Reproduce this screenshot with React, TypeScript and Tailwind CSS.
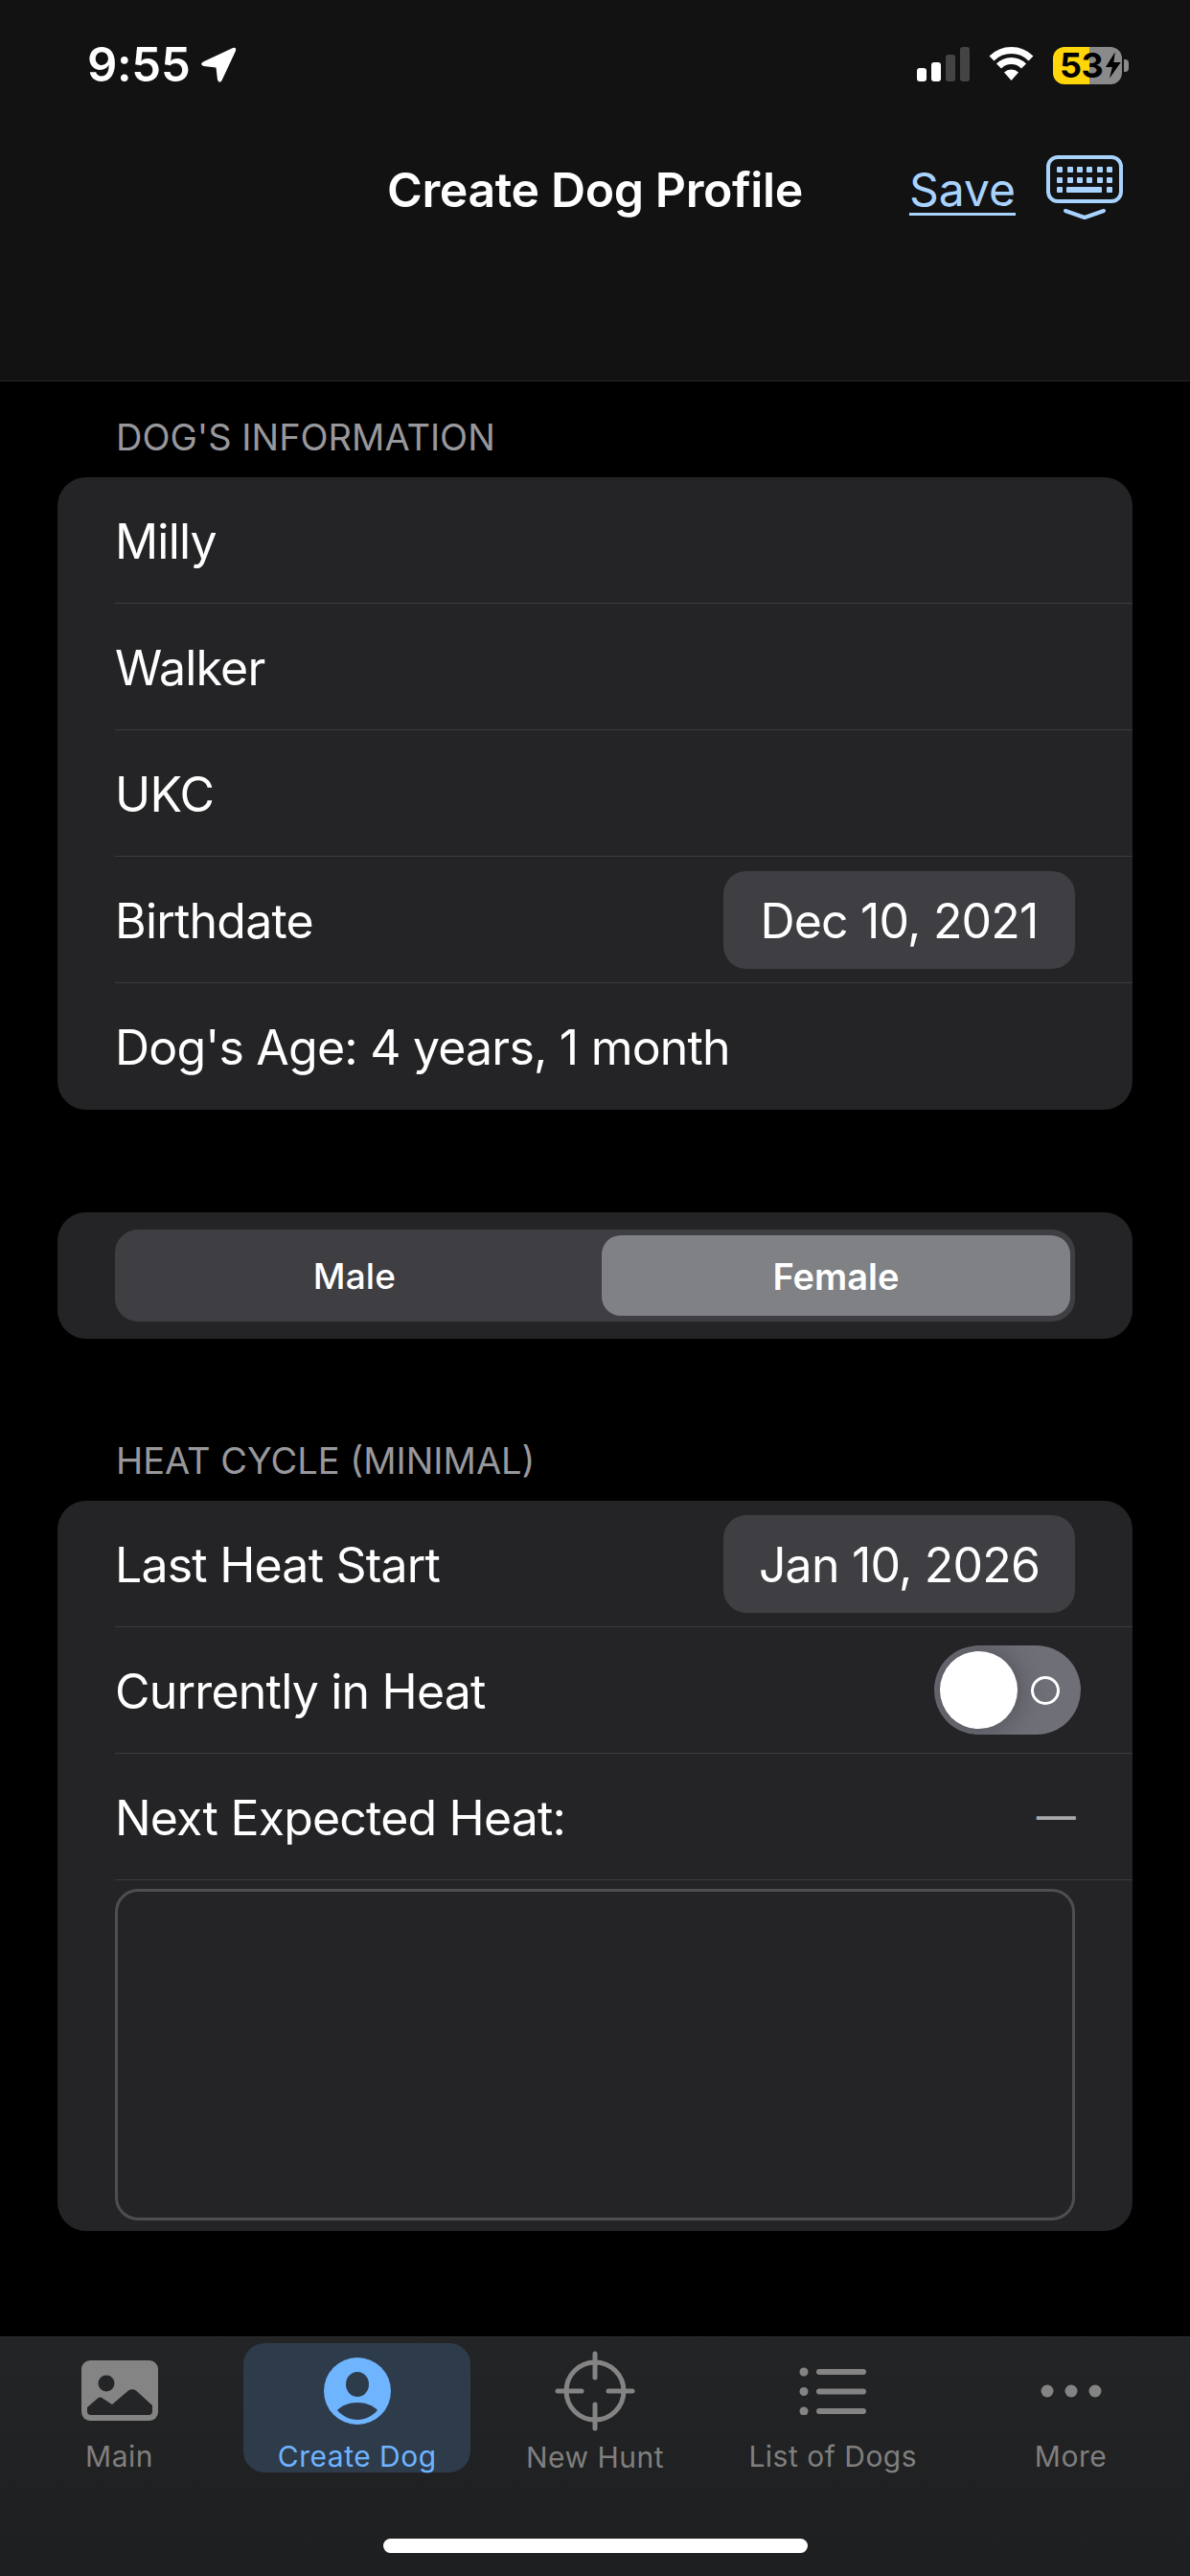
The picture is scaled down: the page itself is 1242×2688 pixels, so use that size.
import React from "react";

function Sep() {
  return <div className="ml-[60px] h-px bg-[#3b3b3e]" />;
}

function Label({ children }: { children: React.ReactNode }) {
  return <span className="pt-[3px]">{children}</span>;
}

function Row({ children }: { children: React.ReactNode }) {
  return <div className="h-[131px] px-[60px] flex items-center justify-between text-[50px] tracking-[-0.8px] text-white">{children}</div>;
}

function DatePill({ text }: { text: string }) {
  return <div className="w-[367px] h-[102px] pt-[3px] rounded-[24px] bg-[#3e3e43] flex items-center justify-center text-[50px] tracking-[-0.8px] text-white">{text}</div>;
}

function SectionLabel({ text }: { text: string }) {
  return <div className="h-[44px] leading-[44px] pl-[61px] text-[38px] tracking-[0px] text-[#98989c]">{text}</div>;
}

function PhotoIcon() {
  return (
    <svg width="80" height="63" viewBox="0 0 80 63">
      <rect x="0" y="0" width="80" height="63" rx="9" fill="#848484" />
      <circle cx="26" cy="24" r="8.5" fill="#242526" />
      <path d="M6 49 L17 39.5 Q19.5 37.5 22 39.5 L32 46 L49 31.5 Q53 29 57 31.5 L74 47 V53 Q74 57 70 57 H10 Q6 57 6 53 Z" fill="#242526" />
    </svg>
  );
}

function PersonIcon() {
  return (
    <svg width="70" height="70" viewBox="0 0 70 70">
      <circle cx="35" cy="35" r="35" fill="#6eb4ff" />
      <ellipse cx="35" cy="28" rx="12" ry="13" fill="#2e3b4a" />
      <path d="M14 55 C19 50 26 47 35 47 C44 47 51 50 56 55 C51 61 43 65 35 65 C27 65 19 61 14 55Z" fill="#2e3b4a" />
    </svg>
  );
}

function CrossIcon() {
  return (
    <svg width="84" height="84" viewBox="0 0 84 84" fill="none" stroke="#848484" strokeWidth="5" strokeLinecap="round">
      <circle cx="42" cy="42" r="30" />
      <path d="M3 42H28M56 42H81M42 3V28M42 56V81" />
    </svg>
  );
}

function ListIcon() {
  return (
    <svg width="70" height="50" viewBox="0 0 70 50" fill="#848484">
      <circle cx="5" cy="5" r="4.5" />
      <circle cx="5" cy="25.5" r="4.5" />
      <circle cx="5" cy="46" r="4.5" />
      <rect x="18" y="2" width="52" height="6" rx="3" />
      <rect x="18" y="22.5" width="52" height="6" rx="3" />
      <rect x="18" y="43" width="52" height="6" rx="3" />
    </svg>
  );
}

function MoreIcon() {
  return (
    <svg width="64" height="14" viewBox="0 0 64 14" fill="#848484">
      <circle cx="7" cy="7" r="6.5" />
      <circle cx="32" cy="7" r="6.5" />
      <circle cx="57" cy="7" r="6.5" />
    </svg>
  );
}

function Tab({ label, icon, active }: { label: string; icon: React.ReactNode; active?: boolean }) {
  return (
    <div className={active ? "w-[237px] h-[135px] rounded-[22px] bg-[#2e3b4a] flex flex-col items-center" : "w-[237px] h-[135px] flex flex-col items-center"}>
      <div className="h-[84px] mt-[8px] flex items-center justify-center">{icon}</div>
      <div className={active ? "mt-[10px] h-[34px] leading-[34px] text-[30px] tracking-[0.5px] text-[#6eb4ff]" : "mt-[10px] h-[34px] leading-[34px] text-[30px] tracking-[0.5px] text-[#7f7f7f]"}>{label}</div>
    </div>
  );
}

export default function App() {
  return (
    <div className="w-[1242px] h-[2688px] flex flex-col bg-black overflow-hidden font-['Inter',sans-serif]">
      <header className="h-[398px] shrink-0 bg-[#121212] border-b border-[#262626] flex flex-col">
        <div className="mt-[48px] h-[40px] flex items-center justify-between pl-[91px] pr-[64px]">
          <div className="flex items-center gap-[11px] text-white text-[49px] font-semibold tracking-[-0.3px]">
            <span>9:55</span>
            <svg width="38" height="38" viewBox="0 0 38 38" fill="#fff">
              <path d="M34 1 L3 15.5 Q-1 18 3.5 20 L16.5 21.5 L18 34.5 Q20 38.5 22.5 35 L37 4 Q38 0 34 1Z" />
            </svg>
          </div>
          <div className="flex items-center">
            <svg width="55" height="36" viewBox="0 0 55 36" className="mt-[-2px]">
              <rect x="0" y="22" width="10" height="14" rx="3" fill="#fff" />
              <rect x="15" y="16" width="10" height="20" rx="3" fill="#fff" />
              <rect x="30" y="8" width="10" height="28" rx="3" fill="#444" />
              <rect x="45" y="0" width="10" height="36" rx="3" fill="#444" />
            </svg>
            <svg width="47" height="36" viewBox="0 0 47 36" className="ml-[20px] mt-[-4px]" fill="none" stroke="#fff" strokeWidth="7">
              <path d="M3 13 A 29 29 0 0 1 44 13" />
              <path d="M10.5 21 A 18 18 0 0 1 36.5 21" />
              <path d="M23.5 36 L16 27.5 A 11 11 0 0 1 31 27.5 Z" fill="#fff" stroke="none" />
            </svg>
            <div className="ml-[20px] w-[72px] h-[39px] rounded-[12px] bg-[linear-gradient(90deg,#ffd60a_53%,#8a8a8a_53%)] flex items-center pl-[7px] text-black text-[36px] font-bold tracking-[-0.5px] leading-none">
              <span>53</span>
              <svg width="18" height="28" viewBox="0 0 18 28" fill="#000" className="ml-[2px]">
                <path d="M11 0 L1 16 H8 L5 28 L17 11 H9.5 Z" />
              </svg>
            </div>
            <div className="ml-[2px] w-[5px] h-[13px] rounded-r-[4px] bg-[#8a8a8a]" />
          </div>
        </div>
        <div className="mt-[69px] h-[80px] grid grid-cols-[1fr_auto_1fr] items-center">
          <div />
          <div className="pt-[2px] text-white text-[50px] font-semibold tracking-[-0.4px]">Create Dog Profile</div>
          <div className="flex items-center justify-end pr-[70px]">
            <span className="pt-[2px] text-[48px] text-[#a9d3ff] underline decoration-[3px] underline-offset-[7px]">Save</span>
            <svg width="80" height="70" viewBox="0 0 80 70" className="ml-[32px]" fill="#a9d3ff">
              <rect x="2" y="2" width="76" height="46" rx="10" fill="none" stroke="#a9d3ff" strokeWidth="4" />
              {[14, 25, 35, 45, 56, 66].map((x) => (
                <React.Fragment key={x}>
                  <rect x={x - 3} y="12" width="6" height="6" rx="1" />
                  <rect x={x - 3} y="23" width="6" height="6" rx="1" />
                </React.Fragment>
              ))}
              <rect x="11" y="33" width="6" height="6" rx="1" />
              <rect x="21" y="33" width="37" height="6" rx="1" />
              <rect x="63" y="33" width="6" height="6" rx="1" />
              <path d="M20 58 L40 65 L60 58" fill="none" stroke="#a9d3ff" strokeWidth="4" strokeLinecap="round" strokeLinejoin="round" />
            </svg>
          </div>
        </div>
      </header>

      <main className="flex-1 bg-black px-[60px] pt-[36px] flex flex-col">
        <SectionLabel text="DOG'S INFORMATION" />
        <div className="mt-[20px] rounded-[30px] bg-[#242426] overflow-hidden">
          <Row><Label>Milly</Label></Row>
          <Sep />
          <Row><Label>Walker</Label></Row>
          <Sep />
          <Row><Label>UKC</Label></Row>
          <Sep />
          <Row>
            <Label>Birthdate</Label>
            <DatePill text="Dec 10, 2021" />
          </Row>
          <Sep />
          <div className="h-[132px] pt-[3px] px-[60px] flex items-center text-[50px] tracking-[-0.8px] text-white">Dog's Age: 4 years, 1 month</div>
        </div>

        <div className="mt-[107px] h-[132px] rounded-[30px] bg-[#242426] px-[60px] flex items-center">
          <div className="w-full h-[96px] rounded-[24px] bg-[#3e3e43] flex items-center pr-[5px]">
            <div className="flex-1 pr-[8px] pt-[2px] text-center text-white text-[37px] font-medium tracking-[0.2px]">Male</div>
            <div className="w-[489px] h-[84px] pt-[2px] rounded-[20px] bg-[#808185] flex items-center justify-center text-white text-[38px] font-semibold">Female</div>
          </div>
        </div>

        <div className="mt-[105px]">
          <SectionLabel text="HEAT CYCLE (MINIMAL)" />
        </div>
        <div className="mt-[20px] rounded-[30px] bg-[#242426] overflow-hidden">
          <Row>
            <Label>Last Heat Start</Label>
            <DatePill text="Jan 10, 2026" />
          </Row>
          <Sep />
          <Row>
            <Label>Currently in Heat</Label>
            <div className="w-[153px] h-[93px] mr-[-6px] rounded-full bg-[#6e6f77] overflow-hidden flex items-center pl-[6px]">
              <div className="w-[81px] h-[81px] rounded-full bg-white shadow-[0_0_30px_rgba(0,0,0,0.3)]" />
              <div className="ml-[14px] w-[30px] h-[30px] rounded-full border-[3px] border-white" />
            </div>
          </Row>
          <Sep />
          <Row>
            <Label>Next Expected Heat:</Label>
            <span className="text-[#a8a8ab] text-[41px] font-medium">—</span>
          </Row>
          <Sep />
          <div className="px-[60px] pt-[9px] pb-[11px]">
            <div className="h-[346px] rounded-[24px] border-[3px] border-[#4e4e50]" />
          </div>
        </div>
      </main>

      <nav className="h-[250px] shrink-0 border-t border-[#2e2e2e] bg-[linear-gradient(180deg,#232425,#1e1f20)] flex flex-col">
        <div className="mt-[6px] px-[6px] flex justify-between">
          <Tab label="Main" icon={<PhotoIcon />} />
          <Tab label="Create Dog" icon={<PersonIcon />} active />
          <Tab label="New Hunt" icon={<CrossIcon />} />
          <Tab label="List of Dogs" icon={<ListIcon />} />
          <Tab label="More" icon={<MoreIcon />} />
        </div>
        <div className="mt-auto mb-[24px] self-center w-[443px] h-[15px] rounded-full bg-white" />
      </nav>
    </div>
  );
}
